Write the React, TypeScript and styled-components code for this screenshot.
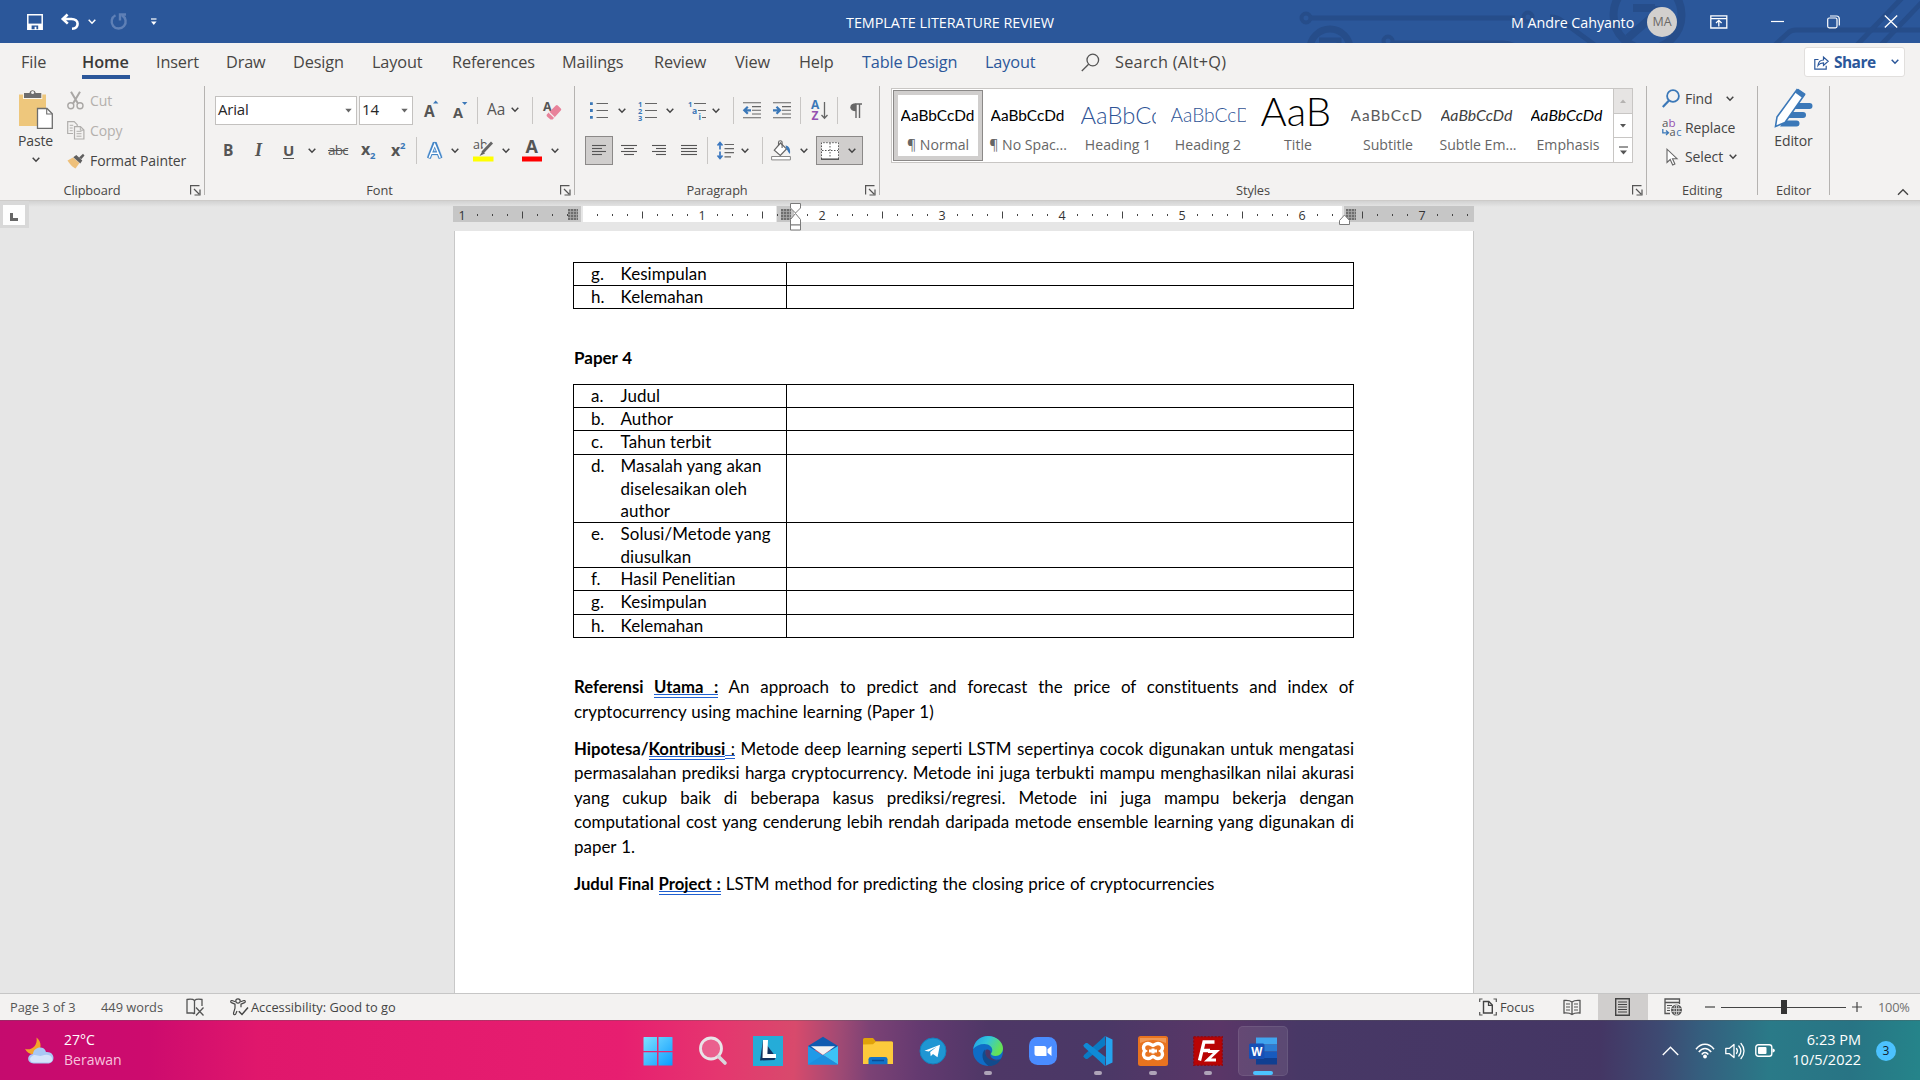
import React from "react";
import styled, { createGlobalStyle } from "styled-components";

const UI = `"Open Sans", "Noto Sans", sans-serif`;
const DOC = `Lato, "Noto Sans", sans-serif`;

const Global = createGlobalStyle`
  * { box-sizing: border-box; }
  html, body { margin: 0; padding: 0; overflow: hidden; }
  body { font-family: ${UI}; color: #444; }
  svg { display: block; flex: none; overflow: visible; }
`;

const Screen = styled.div`
  width: 1920px;
  height: 1080px;
  display: flex;
  flex-direction: column;
  overflow: hidden;
  background: #e6e6e6;
`;

/* ---------- shared pieces ---------- */

type SlotProps = { $w?: number; $pl?: number; $gap?: number };
const Slot = styled.div<SlotProps>`
  flex: none;
  display: flex;
  align-items: center;
  width: ${(p) => (p.$w ? `${p.$w}px` : "auto")};
  padding-left: ${(p) => p.$pl ?? 0}px;
  gap: ${(p) => p.$gap ?? 0}px;
  white-space: nowrap;
`;

type IcoProps = { w: number; h: number; children: React.ReactNode };
const Ico = ({ w, h, children }: IcoProps) => (
  <svg width={w} height={h} viewBox={`0 0 ${w} ${h}`} fill="none">
    {children}
  </svg>
);

const Chevron = ({ color = "#444" }: { color?: string }) => (
  <Ico w={8} h={6}>
    <path d="M.7.8L4 4.200 7.300.8" stroke={color} strokeWidth="1.5" />
  </Ico>
);

const Caret = ({ color = "#666" }: { color?: string }) => (
  <Ico w={7} h={5}>
    <path d="M.3.8h6.400L3.500 4.600z" fill={color} />
  </Ico>
);

/* ---------- title bar ---------- */

const TitleBar = styled.header`
  position: relative;
  height: 43px;
  flex: none;
  display: flex;
  align-items: center;
  background: #2b579a;
  color: #fff;
  font-size: 14px;
`;
const Circuit = styled.div`
  position: absolute;
  top: 0;
  right: 0;
  height: 43px;
  overflow: hidden;
`;
const TitleContent = styled.div`
  position: relative;
  display: flex;
  align-items: center;
  height: 43px;
  width: 100%;
`;
const DocTitle = styled.div`
  width: 664px;
  padding-top: 1px;
  font-size: 14.4px;
  letter-spacing: -0.04px;
  white-space: nowrap;
`;
const UserName = styled.div`
  width: 136px;
  padding-top: 1px;
  font-size: 14.3px;
  letter-spacing: -0.05px;
  white-space: nowrap;
`;
const Avatar = styled.div`
  width: 30px;
  height: 30px;
  margin-right: 33px;
  border-radius: 50%;
  background: #d2d0ce;
  color: #6b6966;
  font-size: 12.5px;
  display: flex;
  align-items: center;
  justify-content: center;
`;

const TitleBarView = () => (
  <TitleBar>
    <Circuit>
      <svg width="640" height="43" viewBox="1280 0 640 43" fill="none" stroke="#264d8a" strokeWidth="5">
        <circle cx="1306" cy="18" r="4.5" strokeWidth="4" />
        <path d="M1311 18h204" />
        <circle cx="1330" cy="49" r="20" strokeWidth="7" />
        <path d="M1319 40h20v6" strokeWidth="5" />
        <circle cx="1388" cy="41" r="4.5" strokeWidth="4" />
        <path d="M1393 43h110q10 0 15 6" />
        <circle cx="1528" cy="17" r="4.5" strokeWidth="4" />
        <path d="M1550 17q8 0 12 4l34 25" />
        <circle cx="1647.5" cy="15" r="34" strokeWidth="8" />
        <path d="M1633 8h22M1660 10l-32 28M1656 6v22" strokeWidth="8" />
        <path d="M1774 46l14-13q3-3 8-3h124" />
        <path d="M1856 46l46-48M1880 46l46-48" />
      </svg>
    </Circuit>
    <TitleContent>
      <Slot $w={61} $pl={27}>
        <Ico w={16} h={16}>
          <path d="M.8.8h14.400v14.400H.8z" stroke="#fff" strokeWidth="1.5" />
          <path d="M1 9.600h14v5.600H1z" fill="#fff" />
          <path d="M4.600 11.400h6.600v3.800H9.400v-2.400H7.600v2.400h-3z" fill="#2b579a" />
        </Ico>
      </Slot>
      <Slot $w={27}>
        <Ico w={18} h={17}>
          <path d="M6.600 1.500L1.800 6l5 4.600M2 6h8.600c3.400 0 6 2 6 4.800 0 2.800-1.800 4.800-5.600 5" stroke="#fff" strokeWidth="2.6" />
        </Ico>
      </Slot>
      <Slot $w={22}>
        <Chevron color="#fff" />
      </Slot>
      <Slot $w={41}>
        <Ico w={17} h={17}>
          <path d="M5.500 2.300A7 7 0 1 0 12 2.400M10 7.500V1.500h6" stroke="#5f80b6" strokeWidth="2.4" />
        </Ico>
      </Slot>
      <Slot $w={695}>
        <Ico w={6} h={8}>
          <path d="M0 1h5.500" stroke="#fff" strokeWidth="1.2" />
          <path d="M0 3.600h5.600L2.800 7z" fill="#fff" />
        </Ico>
      </Slot>
      <DocTitle>TEMPLATE LITERATURE REVIEW</DocTitle>
      <Slot $w={1} />
      <UserName>M Andre Cahyanto</UserName>
      <Avatar>MA</Avatar>
      <Slot $w={61}>
        <Ico w={18} h={14}>
          <path d="M.8.8h16v12.200H.8zM.8 3.600h16" stroke="#fff" strokeWidth="1.3" />
          <path d="M8.800 11.500V5.500M6 8l2.800-2.700L11.600 8" stroke="#fff" strokeWidth="1.3" />
        </Ico>
      </Slot>
      <Slot $w={56}>
        <Ico w={13} h={2}>
          <path d="M0 .5h13" stroke="#fff" strokeWidth="1.2" />
        </Ico>
      </Slot>
      <Slot $w={57}>
        <Ico w={13} h={14}>
          <rect x=".7" y="3" width="9.3" height="9.8" rx="1.5" stroke="#fff" strokeWidth="1.2" />
          <path d="M3 1h6.500Q12.300 1 12.300 4v6.500" stroke="#fff" strokeWidth="1.2" />
        </Ico>
      </Slot>
      <Ico w={14} h={13}>
        <path d="M.8.500l12.400 12M13.200.500L.8 12.500" stroke="#fff" strokeWidth="1.3" />
      </Ico>
    </TitleContent>
  </TitleBar>
);

/* ---------- tab strip ---------- */

const Tabs = styled.nav`
  height: 41px;
  flex: none;
  display: flex;
  padding-left: 21px;
  background: #f3f2f1;
`;
const Tab = styled.div<{ $w: number; $blue?: boolean; $ls?: number }>`
  width: ${(p) => p.$w}px;
  height: 38px;
  flex: none;
  font-size: 16.3px;
  letter-spacing: ${(p) => p.$ls ?? -0.15}px;
  line-height: 38px;
  color: ${(p) => (p.$blue ? "#2b579a" : "#484644")};
  white-space: nowrap;
`;
const ActiveTab = styled(Tab)`
  font-weight: 600;
  color: #3b3a39;
`;
const ActiveLabel = styled.span`
  display: block;
  width: 48px;
  height: 36px;
  border-bottom: 4px solid #2b579a;
`;
const ShareButton = styled.div`
  width: 101px;
  height: 30px;
  margin-top: 4px;
  padding-left: 9px;
  display: flex;
  align-items: center;
  background: #fff;
  border: 1px solid #e1dfdd;
  border-radius: 3px;
  color: #2b579a;
  font-weight: 700;
  font-size: 15.5px;
  letter-spacing: -0.55px;
`;
const SearchIcon = styled.div`
  width: 34px;
  padding-top: 10px;
`;

const TABS: { t: string; w: number; blue?: boolean; active?: boolean }[] = [
  { t: "File", w: 61 },
  { t: "Home", w: 74, active: true },
  { t: "Insert", w: 70 },
  { t: "Draw", w: 67 },
  { t: "Design", w: 79 },
  { t: "Layout", w: 80 },
  { t: "References", w: 110 },
  { t: "Mailings", w: 92 },
  { t: "Review", w: 81 },
  { t: "View", w: 64 },
  { t: "Help", w: 63 },
  { t: "Table Design", w: 123, blue: true },
  { t: "Layout", w: 96, blue: true },
];

const TabStrip = () => (
  <Tabs>
    {TABS.map((t, i) =>
      t.active ? (
        <ActiveTab key={i} $w={t.w} $ls={-0.1}>
          <ActiveLabel>{t.t}</ActiveLabel>
        </ActiveTab>
      ) : (
        <Tab key={i} $w={t.w} $blue={t.blue}>
          {t.t}
        </Tab>
      )
    )}
    <SearchIcon>
      <Ico w={19} h={19}>
        <circle cx="11.8" cy="7" r="5.8" stroke="#555" strokeWidth="1.3" />
        <path d="M7.600 11.200L.8 18" stroke="#555" strokeWidth="1.3" />
      </Ico>
    </SearchIcon>
    <Tab $w={689} $ls={0.27}>Search (Alt+Q)</Tab>
    <ShareButton>
      <Slot $w={20}>
        <Ico w={15} h={15}>
          <path d="M4.500 4.500H.8v9.700h11.400v-3.500" stroke="#2b579a" strokeWidth="1.2" />
          <path d="M4 10.500c.4-3.500 2.300-5.500 5.500-5.500V2l4.700 4.300-4.700 4.200V7.800C7 7.800 5.500 8.500 4 10.500z" stroke="#2b579a" strokeWidth="1.2" />
        </Ico>
      </Slot>
      <Slot $w={57}>Share</Slot>
      <Chevron color="#2b579a" />
    </ShareButton>
  </Tabs>
);

/* ---------- ribbon ---------- */

const Ribbon = styled.section`
  height: 117px;
  flex: none;
  display: flex;
  background: #f3f2f1;
  border-bottom: 1px solid #cdcbc9;
`;
const Group = styled.div<{ $w: number }>`
  width: ${(p) => p.$w}px;
  flex: none;
  display: flex;
  flex-direction: column;
`;
const Body = styled.div`
  height: 96px;
  display: flex;
  flex-direction: column;
  padding-top: 12px;
  gap: 11px;
`;
const SideBySide = styled.div`
  height: 96px;
  display: flex;
`;
const Foot = styled.div`
  height: 20px;
  display: flex;
  align-items: center;
  font-size: 12.8px;
  letter-spacing: -0.1px;
  color: #484644;
`;
const FootLabel = styled.div`
  flex: 1;
  text-align: center;
`;
const Launcher = styled.div`
  width: 20px;
  padding-left: 6px;
`;
const Divider = styled.div`
  width: 1px;
  height: 109px;
  margin-top: 2px;
  flex: none;
  background: #b5b3b1;
`;
const ToolRow = styled.div<{ $pl?: number }>`
  height: 29px;
  display: flex;
  align-items: center;
  padding-left: ${(p) => p.$pl ?? 0}px;
`;
const ToolSep = styled.div`
  width: 1px;
  height: 27px;
  flex: none;
  background: #c8c6c4;
`;

const GroupFoot = ({ label, launcher = true }: { label: string; launcher?: boolean }) => (
  <Foot>
    <FootLabel>{label}</FootLabel>
    {launcher && (
      <Launcher>
        <Ico w={11} h={11}>
          <path d="M.6 9.500V.6H9.500" stroke="#555" strokeWidth="1.2" />
          <path d="M4 4l5 5M10 4.500V10H4.500" stroke="#555" strokeWidth="1.2" />
        </Ico>
      </Launcher>
    )}
  </Foot>
);

/* clipboard */
const BigButton = styled.div<{ $w: number; $pl?: number }>`
  width: ${(p) => p.$w}px;
  padding-top: 4px;
  padding-left: ${(p) => p.$pl ?? 0}px;
  display: flex;
  flex-direction: column;
  align-items: center;
  font-size: 14px;
  letter-spacing: -0.1px;
`;
const BigLabel = styled.div`
  height: 20px;
  margin: 2px 0 6px;
  line-height: 20px;
`;
const CommandList = styled.div<{ $h: number; $pt: number }>`
  display: flex;
  flex-direction: column;
  padding-top: ${(p) => p.$pt}px;
  font-size: 14px;
  letter-spacing: -0.1px;
  & > div {
    height: ${(p) => p.$h}px;
  }
`;
const Command = styled.div<{ $off?: boolean }>`
  display: flex;
  align-items: center;
  color: ${(p) => (p.$off ? "#b3b0ad" : "#444")};
`;

const Clipboard = () => (
  <Group $w={204}>
    <SideBySide>
      <BigButton $w={67} $pl={4}>
        <Ico w={35} h={41}>
          <path d="M1 6.500h27v31.500H1z" fill="#eec77c" />
          <path d="M5 11V4.500h6.500a3.200 3.200 0 0 1 6.300 0h6.500V11z" fill="#fbf6ea" />
          <path d="M6 10V5h5.500a3.200 3.200 0 0 1 6.300 0h5.500v5z" fill="#6d6d6d" />
          <circle cx="14.600" cy="4.500" r="1.500" fill="#f3f2f1" />
          <path d="M19.500 20.500h9.500l5.300 5.300v14.500H19.500z" fill="#fff" stroke="#6d6d6d" strokeWidth="1.3" />
          <path d="M28.700 20.700v5.300h5.300" stroke="#6d6d6d" strokeWidth="1.1" />
        </Ico>
        <BigLabel>Paste</BigLabel>
        <Chevron />
      </BigButton>
      <CommandList $h={30.3} $pt={1}>
        <Command $off>
          <Slot $w={23}>
            <Ico w={17} h={19}>
              <path d="M4 .8l6.800 11.500M13 .8L6.200 12.300" stroke="#a9a7a5" strokeWidth="2" />
              <circle cx="3.8" cy="14.8" r="3" stroke="#a9a7a5" strokeWidth="1.4" />
              <circle cx="13" cy="14.8" r="3" stroke="#a9a7a5" strokeWidth="1.4" />
            </Ico>
          </Slot>
          Cut
        </Command>
        <Command $off>
          <Slot $w={23}>
            <Ico w={18} h={19}>
              <path d="M6 12.500H.7V.7h6.500l3 3V5" stroke="#b0aeac" strokeWidth="1.2" />
              <path d="M7.500 5.700h6l3.400 3.400v8.900H7.500z" stroke="#b0aeac" strokeWidth="1.2" />
              <path d="M2.700 4.300h3.500M2.700 7h3M2.700 9.700h3M9.500 10.300h5M9.500 12.700h5M9.500 15.200h5M13.300 6v3.200h3.400" stroke="#b0aeac" strokeWidth="1" />
            </Ico>
          </Slot>
          Copy
        </Command>
        <Command>
          <Slot $w={23}>
            <Ico w={18} h={16}>
              <path d="M.5 7.500L6 4.500l6.500 5.500-4 5.500C6 14.500 2.500 11 .5 7.500z" fill="#eec07a" />
              <path d="M6.300 4.200l3-2.200 6 5.500-2 3z" fill="#5f5f5f" />
              <path d="M12 4.500L16 .8l1.500 1.700-3.200 3.800z" fill="#5f5f5f" />
            </Ico>
          </Slot>
          Format Painter
        </Command>
      </CommandList>
    </SideBySide>
    <GroupFoot label="Clipboard" />
  </Group>
);

/* font */
const Combo = styled.div<{ $w: number }>`
  width: ${(p) => p.$w}px;
  height: 29px;
  margin-right: 2px;
  padding: 0 4px 0 2px;
  display: flex;
  align-items: center;
  justify-content: space-between;
  background: #fff;
  border: 1px solid #c3c1bf;
  color: #262626;
  font-size: 15px;
  line-height: 25px;
  letter-spacing: -0.2px;
`;
const ComboText = styled.span`
  padding-bottom: 2px;
`;
const Glyph = styled.span<{ $s: number; $b?: boolean; $i?: boolean; $c?: string }>`
  font-size: ${(p) => p.$s}px;
  font-weight: ${(p) => (p.$b ? 700 : 400)};
  font-style: ${(p) => (p.$i ? "italic" : "normal")};
  color: ${(p) => p.$c ?? "#555"};
  line-height: 1.2;
`;
const CaseGlyph = styled(Glyph)`
  padding-bottom: 1px;
`;
const SerifItalic = styled(Glyph)`
  font-family: "Liberation Serif", serif;
  padding-left: 1px;
`;
const UnderGlyph = styled(Glyph)`
  line-height: 1;
  border-bottom: 1px solid #555;
`;
const StrikeGlyph = styled(Glyph)`
  text-decoration: line-through;
  letter-spacing: -0.8px;
`;
const LetterText = ({
  x,
  y,
  s,
  c = "#555",
  b,
  children,
}: {
  x: number;
  y: number;
  s: number;
  c?: string;
  b?: boolean;
  children: React.ReactNode;
}) => (
  <text x={x} y={y} fontSize={s} fill={c} fontWeight={b ? 700 : 400} fontFamily='"Open Sans", sans-serif'>
    {children}
  </text>
);

const FontGroup = () => (
  <Group $w={369}>
    <Body>
      <ToolRow $pl={10}>
        <Combo $w={142}>
          <ComboText>Arial</ComboText> <Caret />
        </Combo>
        <Combo $w={54}>
          <ComboText>14</ComboText> <Caret />
        </Combo>
        <Slot $w={38} $pl={9}>
          <Ico w={15} h={20}>
            <LetterText x={0} y={15.5} s={15.5} b>A</LetterText>
            <path d="M9 2.500l2.700-3 2.700 3z" fill="#3b78b8" />
          </Ico>
        </Slot>
        <Slot $w={24}>
          <Ico w={15} h={20}>
            <LetterText x={0} y={16.5} s={14.5} b>A</LetterText>
            <path d="M9 1l2.700 3L14.400 1z" fill="#3b78b8" />
          </Ico>
        </Slot>
        <ToolSep />
        <Slot $w={54} $pl={9} $gap={6}>
          <CaseGlyph $s={15.4}>Aa</CaseGlyph>
          <Chevron />
        </Slot>
        <ToolSep />
        <Slot $pl={10}>
          <Ico w={19} h={20}>
            <LetterText x={0} y={10} s={12.5} b>A</LetterText>
            <path d="M3.800 13.500l9-9q1-1 2 0l3 3q1 1 0 2l-8.200 9H7.500L4 15.500q-.8-1-.2-2z" fill="#e8829a" />
            <path d="M6 11.300l5.500 5.300" stroke="#f3f2f1" strokeWidth="1.2" />
          </Ico>
        </Slot>
      </ToolRow>
      <ToolRow>
        <Slot $w={49} $pl={18}><Glyph $s={15.5} $b>B</Glyph></Slot>
        <Slot $w={29}><SerifItalic $s={18} $b $i>I</SerifItalic></Slot>
        <Slot $w={25}><UnderGlyph $s={15} $b>U</UnderGlyph></Slot>
        <Slot $w={20}><Chevron /></Slot>
        <Slot $w={33}><StrikeGlyph $s={13.5}>abc</StrikeGlyph></Slot>
        <Slot $w={30}>
          <Ico w={16} h={20}>
            <LetterText x={0} y={14} s={16} b>x</LetterText>
            <LetterText x={9} y={18} s={9.5} b c="#3b78b8">2</LetterText>
          </Ico>
        </Slot>
        <Slot $w={25}>
          <Ico w={16} h={20}>
            <LetterText x={0} y={15} s={16} b>x</LetterText>
            <LetterText x={9} y={8} s={9.5} b c="#3b78b8">2</LetterText>
          </Ico>
        </Slot>
        <ToolSep />
        <Slot $w={34} $pl={9}>
          <Ico w={18} h={20}>
            <g stroke="#bcd7f2" strokeWidth="5" strokeLinejoin="round">
              <path d="M3 16.500L8.700 3l5.700 13.500M5 12h7.500" />
            </g>
            <g stroke="#4385c6" strokeWidth="3.8">
              <path d="M2.800 17.300L8.200 3h1l5.400 14.300M5 12.200h7.500" />
            </g>
            <g stroke="#fff" strokeWidth="1.5">
              <path d="M3.200 16.800L8.700 3.400l5.500 13.400M5 12.200h7.500" />
            </g>
          </Ico>
        </Slot>
        <Slot $w={22}><Chevron /></Slot>
        <Slot $w={29}>
          <Ico w={21} h={22}>
            <LetterText x={0} y={9} s={12.5}>ab</LetterText>
            <path d="M18.500 2.500L8.500 13.500" stroke="#f3f2f1" strokeWidth="5" />
            <path d="M19 2.500L9.500 12.500" stroke="#666" strokeWidth="2.8" />
            <path d="M9.500 11l2.500 2.500L6.500 16z" fill="#666" />
            <path d="M0 16.500h20.500v5H0z" fill="#ff0" />
          </Ico>
        </Slot>
        <Slot $w={20}><Chevron /></Slot>
        <Slot $w={29}>
          <Ico w={20} h={22}>
            <LetterText x={3.6} y={13} s={18} b>A</LetterText>
            <path d="M0 16.500h20v5H0z" fill="#f00" />
          </Ico>
        </Slot>
        <Chevron />
      </ToolRow>
    </Body>
    <GroupFoot label="Font" />
  </Group>
);

/* paragraph */
const Pressed = styled.div<{ $w: number; $pl: number; $gap?: number }>`
  width: ${(p) => p.$w}px;
  height: 29px;
  flex: none;
  padding-left: ${(p) => p.$pl}px;
  gap: ${(p) => p.$gap ?? 0}px;
  display: flex;
  align-items: center;
  background: #d0cecd;
  border: 1px solid #8b8988;
`;

const Lines = ({ w, rows }: { w: number; rows: [number, number][] }) => (
  <Ico w={w} h={14}>
    {rows.map(([a, b], i) => (
      <path key={i} d={`M${a} ${1.5 + i * 3}h${b - a}`} stroke="#555" strokeWidth="1.1" />
    ))}
  </Ico>
);

const Dent = ({ flip }: { flip?: boolean }) => (
  <Ico w={18} h={17}>
    <path d="M0 .8h18M9 4.600h9M9 8.300h9M9 12h9M0 15.800h18" stroke="#666" strokeWidth="1.1" />
    <path
      d={flip ? "M0 8.300h6M3.500 4.800L7 8.300l-3.500 3.500" : "M1.500 8.300H8M4.800 4.800L1.300 8.300l3.500 3.500"}
      stroke="#3b78b8"
      strokeWidth="2.2"
    />
  </Ico>
);

const Paragraph = () => (
  <Group $w={304}>
    <Body>
      <ToolRow>
        <Slot $w={43} $pl={15}>
          <Ico w={19} h={18}>
            <path d="M6.500 1.500H18M6.500 8.500H18M6.500 15.500H18" stroke="#666" strokeWidth="1.2" />
            <path d="M0 .2h2.800V3H0zM0 7.100h2.800v2.800H0zM0 14h2.800v2.800H0z" fill="#3b78b8" />
          </Ico>
        </Slot>
        <Slot $w={20}><Chevron /></Slot>
        <Slot $w={28}>
          <Ico w={19} h={20}>
            <path d="M7 2.500H19M7 9.500H19M7 16.500H19" stroke="#666" strokeWidth="1.2" />
            <LetterText x={0} y={5.5} s={7.5} b c="#3b78b8">1</LetterText>
            <LetterText x={0} y={12.5} s={7.5} b c="#3b78b8">2</LetterText>
            <LetterText x={0} y={19.5} s={7.5} b c="#3b78b8">3</LetterText>
          </Ico>
        </Slot>
        <Slot $w={22}><Chevron /></Slot>
        <Slot $w={24}>
          <Ico w={19} h={20}>
            <path d="M6 2.500H18M10 9.500H18M14 16.500H18" stroke="#666" strokeWidth="1.2" />
            <LetterText x={0} y={5.5} s={7.5} b c="#3b78b8">1</LetterText>
            <LetterText x={4} y={12.5} s={8.5} b c="#3b78b8">a</LetterText>
            <LetterText x={10.5} y={19} s={8} b c="#3b78b8">i</LetterText>
          </Ico>
        </Slot>
        <Slot $w={21}><Chevron /></Slot>
        <ToolSep />
        <Slot $w={39} $pl={9}><Dent /></Slot>
        <Slot $w={27}><Dent flip /></Slot>
        <ToolSep />
        <Slot $w={36} $pl={10}>
          <Ico w={18} h={21}>
            <LetterText x={0} y={9} s={12} b c="#3b78b8">A</LetterText>
            <LetterText x={0.6} y={19.5} s={12} b c="#9450b0">Z</LetterText>
            <path d="M13.500 2v16M10.500 15l3 3.300 3-3.300" stroke="#666" strokeWidth="1.3" />
          </Ico>
        </Slot>
        <ToolSep />
        <Slot $pl={12}>
          <Ico w={12} h={16}>
            <path d="M5.500 1H12M6 1v14M9.500 1v14" stroke="#666" strokeWidth="1.4" />
            <path d="M6 .3v8C2.500 8.300.3 7 .3 4.300S2.500.3 6 .3z" fill="#666" />
          </Ico>
        </Slot>
      </ToolRow>
      <ToolRow $pl={10}>
        <Pressed $w={28} $pl={6}>
          <Lines w={15} rows={[[0, 14], [0, 10], [0, 14], [0, 10]]} />
        </Pressed>
        <Slot $w={39} $pl={8}><Lines w={16} rows={[[0, 16], [3, 13], [0, 16], [3, 13]]} /></Slot>
        <Slot $w={29}><Lines w={15} rows={[[0, 14], [4, 14], [0, 14], [4, 14]]} /></Slot>
        <Slot $w={26}><Lines w={16} rows={[[0, 16], [0, 16], [0, 16], [0, 16]]} /></Slot>
        <ToolSep />
        <Slot $w={33} $pl={9}>
          <Ico w={18} h={19}>
            <path d="M7.500 3.500H17M7.500 7.600H17M7.500 11.700H17M7.500 15.800H14" stroke="#666" strokeWidth="1.2" />
            <path d="M3 1.500v16M.5 4.500L3 1.500l2.500 3M.5 14.500l2.500 3 2.500-3" stroke="#3b78c0" strokeWidth="1.7" />
            <path d="M1.500 9.500h3" stroke="#f3f2f1" strokeWidth="2" />
          </Ico>
        </Slot>
        <Slot $w={21}><Chevron /></Slot>
        <ToolSep />
        <Slot $w={37} $pl={8}>
          <Ico w={20} h={21}>
            <path d="M9.500 3L3.300 10.200l6 5.200 6.200-6.500z" fill="#fff" stroke="#666" strokeWidth="1.2" />
            <path d="M7.500 6V2.500a1.800 1.800 0 0 1 3.600 0V8" stroke="#666" strokeWidth="1.1" />
            <path d="M14.500 5.500c3.500.5 5 3 4.500 8.500-1.500-1-2-3-3.500-5z" fill="#3b78b8" />
            <path d="M.6 16.500h18.800v3.400H.6z" fill="#fff" stroke="#888" />
          </Ico>
        </Slot>
        <Slot $w={16}><Chevron /></Slot>
        <Pressed $w={47} $pl={4} $gap={9}>
          <Ico w={18} h={18}>
            <path d="M.5.500h17v16H.5z" fill="#fff" />
            <path d="M.5 17V.7h17V17M9 1v15M1 8.500h16" stroke="#555" strokeDasharray="1.5 1.5" />
            <path d="M0 17.200h18" stroke="#444" strokeWidth="1.3" />
          </Ico>
          <Chevron />
        </Pressed>
      </ToolRow>
    </Body>
    <GroupFoot label="Paragraph" />
  </Group>
);

/* styles gallery */
const GalleryWrap = styled.div`
  height: 96px;
  padding: 4px 0 0 11px;
`;
const Gallery = styled.div`
  width: 742px;
  height: 75px;
  display: flex;
  background: #fff;
  border: 1px solid #c8c6c4;
  padding: 1px 0 0 1px;
`;
const StyleItem = styled.div<{ $sel?: boolean }>`
  width: 90px;
  height: 71px;
  flex: none;
  display: flex;
  flex-direction: column;
  align-items: center;
  padding-top: 8px;
  box-shadow: ${(p) => (p.$sel ? "inset 0 0 0 1px #8b8988, inset 0 0 0 5px #d0cecd" : "none")};
`;
type PreviewProps = { $s: number; $c: string; $w?: number; $i?: boolean; $ls?: number; $up?: number };
const Preview = styled.div<PreviewProps>`
  width: 75px;
  height: 33px;
  padding-bottom: ${(p) => p.$up ?? 0}px;
  display: flex;
  align-items: center;
  overflow: hidden;
  white-space: nowrap;
  font-family: ${DOC};
  font-size: ${(p) => p.$s}px;
  font-weight: ${(p) => p.$w ?? 400};
  font-style: ${(p) => (p.$i ? "italic" : "normal")};
  letter-spacing: ${(p) => p.$ls ?? 0}px;
  line-height: 30px;
  color: ${(p) => p.$c};
`;
const StyleName = styled.div`
  height: 26px;
  line-height: 28px;
  font-size: 14.1px;
  color: #666;
  white-space: nowrap;
`;
const GalleryNav = styled.div`
  width: 19px;
  margin: -1px 0 0 auto;
  display: flex;
  flex-direction: column;
  border-left: 1px solid #c8c6c4;
`;
const NavBtn = styled.div<{ $off?: boolean }>`
  flex: 1;
  display: flex;
  flex-direction: column;
  gap: 3px;
  align-items: center;
  justify-content: center;
  background: ${(p) => (p.$off ? "#e6e4e3" : "#fff")};
  & + & {
    border-top: 1px solid #c8c6c4;
  }
`;

const STYLES = [
  { n: "¶ Normal", p: "AaBbCcDd", s: 15.4, c: "#000", sel: true },
  { n: "¶ No Spac...", p: "AaBbCcDd", s: 15.4, c: "#000" },
  { n: "Heading 1", p: "AaBbCc", s: 23.8, c: "#2f5496", w: 300 },
  { n: "Heading 2", p: "AaBbCcD", s: 19.2, c: "#2f5496", w: 300 },
  { n: "Title", p: "AaB", s: 40, c: "#000", w: 300, up: 8 },
  { n: "Subtitle", p: "AaBbCcD", s: 15.4, c: "#5a5a5a", ls: 1 },
  { n: "Subtle Em...", p: "AaBbCcDd", s: 15.9, c: "#404040", i: true },
  { n: "Emphasis", p: "AaBbCcDd", s: 15.9, c: "#000", i: true },
];

const StylesGroup = () => (
  <Group $w={766}>
    <GalleryWrap>
      <Gallery>
        {STYLES.map((x) => (
          <StyleItem key={x.n} $sel={x.sel}>
            <Preview $s={x.s} $c={x.c} $w={x.w} $i={x.i} $ls={x.ls} $up={x.up}>{x.p}</Preview>
            <StyleName>{x.n}</StyleName>
          </StyleItem>
        ))}
        <GalleryNav>
          <NavBtn $off>
            <Ico w={6} h={4}><path d="M0 4h6L3 .5z" fill="#b5b3b1" /></Ico>
          </NavBtn>
          <NavBtn>
            <Ico w={6} h={4}><path d="M0 0h6L3 3.500z" fill="#555" /></Ico>
          </NavBtn>
          <NavBtn>
            <Ico w={9} h={9}>
              <path d="M0 1h9" stroke="#555" strokeWidth="1.2" />
              <path d="M1 4.500h7L4.500 8.500z" fill="#555" />
            </Ico>
          </NavBtn>
        </GalleryNav>
      </Gallery>
    </GalleryWrap>
    <GroupFoot label="Styles" />
  </Group>
);

/* editing + editor */
const EditingBody = styled.div`
  height: 96px;
  padding-left: 15px;
`;
const Collapse = styled.div`
  flex: 1;
  display: flex;
  align-items: flex-end;
  justify-content: flex-end;
  padding: 0 11px 4px 0;
`;

const Editing = () => (
  <Group $w={110}>
    <EditingBody>
      <CommandList $h={29.2} $pt={0}>
        <Command>
          <Slot $w={23}>
            <Ico w={18} h={19}>
              <circle cx="11" cy="7" r="5.9" stroke="#3b78b8" strokeWidth="1.8" />
              <path d="M7 11.500L.8 18" stroke="#3b78b8" strokeWidth="2.2" />
            </Ico>
          </Slot>
          <Slot $w={41}>Find</Slot>
          <Chevron />
        </Command>
        <Command>
          <Slot $w={23}>
            <Ico w={20} h={20}>
              <LetterText x={0} y={9} s={11.5}>a</LetterText>
              <LetterText x={6.6} y={9} s={11.5} c="#9450b0">b</LetterText>
              <LetterText x={7.6} y={18} s={11}>a</LetterText>
              <LetterText x={14.2} y={18} s={11} c="#3b78b8">c</LetterText>
              <path d="M.8 11v3.800H6M4 12.500l2.500 2.300L4 17" stroke="#3b78b8" strokeWidth="1.3" />
            </Ico>
          </Slot>
          Replace
        </Command>
        <Command>
          <Slot $w={23} $pl={4}>
            <Ico w={12} h={18}>
              <path d="M1 1.200v13.300l3.200-3 2.500 5.500 2.200-1-2.400-5.300H11z" fill="#fff" stroke="#666" strokeWidth="1.1" />
            </Ico>
          </Slot>
          <Slot $w={44}>Select</Slot>
          <Chevron />
        </Command>
      </CommandList>
    </EditingBody>
    <GroupFoot label="Editing" launcher={false} />
  </Group>
);

const EditorGroup = () => (
  <Group $w={71}>
    <SideBySide>
      <BigButton $w={71}>
        <Ico w={40} h={41}>
          <path d="M17 15h18.500a3 3 0 0 1 0 6H14zM14 24h15a3 3 0 0 1 0 6H10zM10 32.500h12.500a3 3 0 0 1 0 6H6z" fill="#3b78b8" />
          <path d="M3 29L23 1.500l7.500 5.200L11 34.500 1.500 38.500z" fill="#fff" stroke="#3b78b8" strokeWidth="1.6" />
          <path d="M21 4.500L24.200.8l7.300 5-3 4.200z" fill="#3b78b8" />
        </Ico>
        <BigLabel>Editor</BigLabel>
      </BigButton>
    </SideBySide>
    <GroupFoot label="Editor" launcher={false} />
  </Group>
);

const RibbonView = () => (
  <Ribbon>
    <Clipboard />
    <Divider />
    <FontGroup />
    <Divider />
    <Paragraph />
    <Divider />
    <StylesGroup />
    <Divider />
    <Editing />
    <Divider />
    <EditorGroup />
    <Divider />
    <Collapse>
      <Ico w={12} h={8}>
        <path d="M1 6.800l5-5 5 5" stroke="#444" strokeWidth="1.4" />
      </Ico>
    </Collapse>
  </Ribbon>
);

/* ---------- workspace ---------- */

const Workspace = styled.main`
  height: 792px;
  flex: none;
  display: flex;
  background: linear-gradient(#d2d2d2, #e6e6e6 6px);
`;
const Gutter = styled.div`
  width: 453px;
  flex: none;
`;
const TabStop = styled.div`
  width: 29px;
  height: 27px;
  padding: 4px 0 0 3px;
  background: #d8d8d8;
`;
const TabStopFace = styled.div`
  width: 22px;
  height: 20px;
  padding: 8px 0 0 7px;
  background: #fdfdfd;
`;
const TabStopMark = styled.div`
  width: 8px;
  height: 8px;
  border: solid #666;
  border-width: 0 0 3px 3px;
`;
const Column = styled.div`
  width: 1021px;
  display: flex;
  flex-direction: column;
`;
const RulerBar = styled.div`
  height: 30px;
`;
const Page = styled.article`
  width: 1020px;
  margin-left: 1px;
  flex: 1;
  padding: 31px 0 0 118px;
  background: #fff;
  border: solid #c8c8c8;
  border-width: 0 1px;
  font-family: ${DOC};
  font-size: 16.95px;
  font-variant-ligatures: none;
  color: #000;
`;

const Hatch = ({ x }: { x: number }) => (
  <g>
    <rect x={x} y="8" width="10" height="11" fill="#6e6e6e" />
    <path
      d={`M${x} 10.500h10M${x} 13.500h10M${x} 16.500h10M${x + 2.5} 8v11M${x + 5.5} 8v11M${x + 8.5} 8v11`}
      stroke="#a8a8a8"
      strokeWidth=".8"
    />
  </g>
);

const Ruler = () => {
  const marks: React.ReactNode[] = [];
  for (let i = -8; i <= 59; i++) {
    const x = 129 + i * 15;
    if (i === 0 || (x > 326 && x < 350) || x > 1018 || (x > 890 && x < 902)) continue;
    if (i % 8 === 0) {
      marks.push(
        <text key={i} x={x} y="18.5" fontSize="12.5" textAnchor="middle" fill="#333" fontFamily='"Open Sans", sans-serif'>
          {Math.abs(i / 8)}
        </text>
      );
    } else if (i % 4 === 0) {
      marks.push(<path key={i} d={`M${x + 0.5} 10.500v7`} stroke="#444" />);
    } else {
      marks.push(<path key={i} d={`M${x + 0.5} 13v2`} stroke="#444" />);
    }
  }
  return (
    <svg width="1021" height="29" viewBox="0 0 1021 29" fill="none">
      <path d="M0 5h128v16H0z" fill="#c6c6c6" />
      <path d="M130 5h193v16H130z" fill="#fff" />
      <path d="M324 5h17v16h-17z" fill="#c6c6c6" />
      <path d="M341 5h548v16H341z" fill="#fff" />
      <path d="M891 5h130v16H891z" fill="#c6c6c6" />
      {marks}
      <Hatch x={115} />
      <Hatch x={328} />
      <Hatch x={893} />
      <g fill="#fff" stroke="#7a7a7a">
        <path d="M337.500 2.500h10v4.500l-5 5-5-5z" />
        <path d="M337.500 24v-5.500l5-6 5 6V24z" />
        <path d="M337.500 24h10v5h-10z" />
        <path d="M886.500 23.500v-4l5-5.500 5 5.500v4z" />
      </g>
    </svg>
  );
};

const Table = styled.div`
  width: 781px;
  border: 1px solid #000;
`;
const Row = styled.div<{ $h: number }>`
  height: ${(p) => p.$h}px;
  display: flex;
  & + & {
    border-top: 1px solid #000;
  }
`;
const KeyCell = styled.div`
  width: 213px;
  display: flex;
  padding-left: 17px;
  border-right: 1px solid #000;
  line-height: 22.6px;
  letter-spacing: 0.07px;
`;
const Marker = styled.span`
  width: 29.5px;
  flex: none;
`;
const CellText = styled.div`
  white-space: pre;
`;
const PaperTitle = styled.h2`
  margin: 0 0 0 1px;
  height: 75px;
  padding-top: 37px;
  font-size: 17px;
  line-height: 24px;
  font-weight: 700;
  word-spacing: 0.6px;
`;
const Para = styled.div<{ $mt: number }>`
  width: 780px;
  margin-left: 1px;
  margin-top: ${(p) => p.$mt}px;
`;
const Line = styled.div<{ $last?: boolean }>`
  height: 24.5px;
  line-height: 24.5px;
  text-align: justify;
  text-align-last: ${(p) => (p.$last ? "left" : "justify")};
  word-spacing: ${(p) => (p.$last ? 0.7 : 0)}px;
  white-space: nowrap;
`;
const Bold = styled.b`
  font-weight: 700;
  font-size: 16.7px;
`;
const Flagged = styled.span`
  padding-bottom: 3px;
  background:
    linear-gradient(#1f5fd0, #1f5fd0) 0 17px / 100% 1px no-repeat,
    linear-gradient(#1f5fd0, #1f5fd0) 0 20px / 100% 1px no-repeat;
`;

type RowData = { k: string; t: string; h: number };
const PAPER3: RowData[] = [
  { k: "g.", t: "Kesimpulan", h: 22 },
  { k: "h.", t: "Kelemahan", h: 23 },
];
const PAPER4: RowData[] = [
  { k: "a.", t: "Judul", h: 22 },
  { k: "b.", t: "Author", h: 23 },
  { k: "c.", t: "Tahun terbit", h: 24 },
  { k: "d.", t: "Masalah yang akan\ndiselesaikan oleh\nauthor", h: 68 },
  { k: "e.", t: "Solusi/Metode yang\ndiusulkan", h: 45 },
  { k: "f.", t: "Hasil Penelitian", h: 23 },
  { k: "g.", t: "Kesimpulan", h: 24 },
  { k: "h.", t: "Kelemahan", h: 23 },
];

const PaperTable = ({ rows }: { rows: RowData[] }) => (
  <Table>
    {rows.map((r) => (
      <Row key={r.k} $h={r.h}>
        <KeyCell>
          <Marker>{r.k}</Marker>
          <CellText>{r.t}</CellText>
        </KeyCell>
      </Row>
    ))}
  </Table>
);

const DocumentView = () => (
  <Workspace>
    <Gutter>
      <TabStop>
        <TabStopFace>
          <TabStopMark />
        </TabStopFace>
      </TabStop>
    </Gutter>
    <Column>
      <RulerBar>
        <Ruler />
      </RulerBar>
      <Page>
        <PaperTable rows={PAPER3} />
        <PaperTitle>Paper 4</PaperTitle>
        <PaperTable rows={PAPER4} />
        <Para $mt={37}>
          <Line>
            <Bold>Referensi <Flagged>Utama :</Flagged></Bold> An approach to predict and forecast the price of constituents and index of
          </Line>
          <Line $last>cryptocurrency using machine learning (Paper 1)</Line>
        </Para>
        <Para $mt={12.5}>
          <Line>
            <Bold>Hipotesa/<Flagged>Kontribusi</Flagged></Bold><Flagged> :</Flagged> Metode deep learning seperti LSTM sepertinya cocok digunakan untuk mengatasi
          </Line>
          <Line>permasalahan prediksi harga cryptocurrency. Metode ini juga terbukti mampu menghasilkan nilai akurasi</Line>
          <Line>yang cukup baik di beberapa kasus prediksi/regresi. Metode ini juga mampu bekerja dengan</Line>
          <Line>computational cost yang cenderung lebih rendah daripada metode ensemble learning yang digunakan di</Line>
          <Line $last>paper 1.</Line>
        </Para>
        <Para $mt={12.5}>
          <Line $last>
            <Bold>Judul Final <Flagged>Project :</Flagged></Bold> LSTM method for predicting the closing price of cryptocurrencies
          </Line>
        </Para>
      </Page>
    </Column>
  </Workspace>
);

/* ---------- status bar ---------- */

const StatusBar = styled.footer`
  height: 27px;
  flex: none;
  display: flex;
  align-items: center;
  background: #f3f2f1;
  border-top: 1px solid #c6c6c6;
  font-size: 12.8px;
  color: #555;
`;
const ViewActive = styled.div`
  width: 50px;
  height: 26px;
  margin-right: 16px;
  display: flex;
  align-items: center;
  padding-left: 17px;
  background: #d0cecd;
`;
const Track = styled.div`
  width: 125px;
  height: 14px;
  margin: 0 6px;
  display: flex;
  align-items: center;
  background: linear-gradient(#444, #444) 0 7px / 100% 1px no-repeat;
`;
const Thumb = styled.div`
  width: 6px;
  height: 14px;
  margin-left: 60px;
  background: #333;
`;
const Zoomed = styled.div`
  margin-left: 16px;
  color: #707070;
  letter-spacing: -0.2px;
`;
const Dark = styled.span`
  color: #444;
  letter-spacing: 0.02px;
`;

const StatusView = () => (
  <StatusBar>
    <Slot $w={101} $pl={10}>Page 3 of 3</Slot>
    <Slot $w={85}>449 words</Slot>
    <Slot $w={44}>
      <Ico w={19} h={18}>
        <path d="M8.500 2.500C7 1 4 1 1 1.500v13.500h5c1.500 0 2 .3 2.500 1M8.500 16V2.500C10 1 13 1 16 1.500V8" stroke="#555" strokeWidth="1.3" />
        <path d="M10 9.500l7.500 8M17.500 9.500L10 17.500" stroke="#555" strokeWidth="1.3" />
      </Ico>
    </Slot>
    <Slot $w={21}>
      <Ico w={19} h={18}>
        <circle cx="8" cy="3" r="2.2" stroke="#444" strokeWidth="1.2" />
        <path d="M5.500 3.800L2 2.500C.5 2.300.3 4 1.500 4.600L5 6.200v4L3.500 15c-.2 1.800 1.500 2.300 2.200 1L7 13M10.500 3.800L14 2.500c1.500-.2 1.700 1.500.5 2.100L11 6.200v3" stroke="#444" strokeWidth="1.2" />
        <path d="M8.800 13.200l3.200 3.300 6-7" stroke="#444" strokeWidth="1.5" />
      </Ico>
    </Slot>
    <Slot $w={1228}><Dark>Accessibility: Good to go</Dark></Slot>
    <Slot $w={21}>
      <Ico w={18} h={18}>
        <path d="M.7 4V1H3.500M14.500 1h2.800v3M.7 14v3H3.500M14.500 17h2.800v-3" stroke="#555" strokeWidth="1.2" />
        <path d="M4.500 3.500h5.300l3.500 3.500v8H4.500z" stroke="#444" strokeWidth="1.4" />
        <path d="M9.500 3.800v3.500h3.500" stroke="#444" strokeWidth="1.2" />
      </Ico>
    </Slot>
    <Slot $w={63}><Dark>Focus</Dark></Slot>
    <Slot $w={35}>
      <Ico w={18} h={17}>
        <path d="M9 3C7 1.500 4 1.200 1 1.500v12.500c3-.2 6 0 8 1.500 2-1.500 5-1.700 8-1.500V1.500c-3-.3-6 0-8 1.500zM9 3v12.500" stroke="#555" strokeWidth="1.3" />
        <path d="M3 5h4M3 8h4M3 11h4M11 5h4M11 8h4M11 11h4" stroke="#555" strokeWidth="1.2" />
      </Ico>
    </Slot>
    <ViewActive>
      <Ico w={15} h={18}>
        <path d="M.7.7h13.600v16.500H.7z" stroke="#444" strokeWidth="1.4" />
        <path d="M3 4h9M3 6.500h9M3 9h9M3 11.500h9M3 14h9" stroke="#444" strokeWidth="1.2" />
      </Ico>
    </ViewActive>
    <Slot $w={41}>
      <Ico w={19} h={18}>
        <path d="M6 15.500H1V1h14.500v5M1 4.500h14.500" stroke="#555" strokeWidth="1.3" />
        <path d="M3 7.500h5M3 10h3M3 12.500h3" stroke="#555" strokeWidth="1.2" />
        <circle cx="12.5" cy="12" r="5.5" fill="#555" />
        <path d="M12.500 7v10M7.500 10.500h10M7.500 13.500h10" stroke="#d8d8d8" strokeWidth=".8" />
        <ellipse cx="12.5" cy="12" rx="2.5" ry="5" stroke="#d8d8d8" strokeWidth=".8" />
      </Ico>
    </Slot>
    <Ico w={10} h={2}><path d="M0 1h10" stroke="#444" strokeWidth="1.2" /></Ico>
    <Track><Thumb /></Track>
    <Ico w={10} h={10}><path d="M0 5h10M5 0v10" stroke="#444" strokeWidth="1.2" /></Ico>
    <Zoomed>100%</Zoomed>
  </StatusBar>
);

/* ---------- taskbar ---------- */

const Taskbar = styled.div`
  height: 60px;
  flex: none;
  display: flex;
  align-items: center;
  border-top: 1px solid rgba(90, 90, 90, 0.35);
  color: #fff;
  background: linear-gradient(
    92deg,
    #c50b6e 0,
    #cd0b6e 150px,
    #e0176c 260px,
    #e71e70 620px,
    #e5366f 720px,
    #d84a6c 795px,
    #a04a74 840px,
    #7c4275 870px,
    #643a70 920px,
    #4e3766 990px,
    #4a3866 1100px,
    #5a3667 1220px,
    #483866 1300px,
    #443664 1600px,
    #3d4a72 1660px,
    #355e7e 1700px,
    #2a7a88 1770px,
    #287484 1850px,
    #25848a 1920px
  );
`;
const Weather = styled.div`
  width: 567px;
  font-size: 14px;
  line-height: 20px;
  padding-bottom: 1px;
`;
const Faint = styled.div`
  color: #f7c3dd;
`;
const AppButton = styled.div<{ $on?: boolean }>`
  position: relative;
  width: 50px;
  height: 50px;
  margin: 0 5px 0 0;
  flex: none;
  display: flex;
  align-items: center;
  justify-content: center;
  border-radius: 5px;
  background: ${(p) => (p.$on ? "rgba(255,255,255,0.09)" : "transparent")};
  border: 1px solid ${(p) => (p.$on ? "rgba(255,255,255,0.08)" : "transparent")};
`;
const RunMark = styled.i<{ $on?: boolean }>`
  position: absolute;
  bottom: 0;
  width: ${(p) => (p.$on ? 20 : 8)}px;
  height: 4px;
  border-radius: 2px;
  background: ${(p) => (p.$on ? "#4cc2ff" : "#aea3b8")};
`;
const Tray = styled.div`
  margin-left: auto;
  display: flex;
  align-items: center;
`;
const Clock = styled.div`
  width: 86px;
  padding-bottom: 1px;
  text-align: right;
  font-size: 14.5px;
  line-height: 20px;
`;
const Badge = styled.div`
  width: 20px;
  height: 20px;
  margin: 0 24px 0 15px;
  border-radius: 50%;
  background: #4cc2ff;
  color: #10202c;
  font-size: 12px;
  display: flex;
  align-items: center;
  justify-content: center;
`;

const Svg30 = ({ children }: { children: React.ReactNode }) => (
  <svg width="30" height="30" viewBox="0 0 30 30" fill="none">
    {children}
  </svg>
);

const APPS: { run?: boolean; on?: boolean; icon: React.ReactNode }[] = [
  {
    icon: (
      <Svg30>
        <defs>
          <linearGradient id="win" x1="0" y1="0" x2="1" y2="1" gradientUnits="objectBoundingBox">
            <stop stopColor="#7fe0ff" />
            <stop offset="1" stopColor="#0a9cff" />
          </linearGradient>
        </defs>
        <path d="M.5 1.500q0-.5.500-.5H14v14H.5zM15.500 1H29q.5 0 .5.500V15h-14zM.5 16.200H14v13.300H1q-.5 0-.5-.5zM15.500 16.200h14V29q0 .5-.5.500H15.500z" fill="url(#win)" />
      </Svg30>
    ),
  },
  {
    icon: (
      <Svg30>
        <circle cx="13" cy="12.5" r="10.5" fill="#fff" fillOpacity=".22" stroke="#e9e4e8" strokeWidth="2.8" />
        <path d="M20.500 20.500l6.500 6.500" stroke="#d9d6dc" strokeWidth="3.6" strokeLinecap="round" />
      </Svg30>
    ),
  },
  {
    icon: (
      <Svg30>
        <path d="M0 0h30v30H0z" fill="#25acd8" />
        <path d="M10 4L7 24.500l14.500-.5 1.500-3z" fill="#12325f" />
        <path d="M10 4h5l-.6 14H23v4H9.500z" fill="#fff" />
      </Svg30>
    ),
  },
  {
    icon: (
      <Svg30>
        <path d="M0 10L15 .8 30 10v4H0z" fill="#0f5bb0" />
        <path d="M3 10.200h24L15 19z" fill="#f2f2f2" />
        <path d="M0 10l15 9.500L30 28.500H0z" fill="#1f9ae8" />
        <path d="M30 10v18.500L15 19z" fill="#3cc3f5" />
        <path d="M0 28.500L15 19l15 9.500z" fill="#1c8fdf" />
      </Svg30>
    ),
  },
  {
    icon: (
      <Svg30>
        <path d="M0 3.500Q0 2 1.500 2H10l3 3.500H28.500Q30 5.500 30 7v4H0z" fill="#e0a20a" />
        <path d="M0 28V8.500l10-.3L13 5.600h15.500Q30 5.600 30 7v21z" fill="#fcca3c" />
        <path d="M5.500 28.200v-5Q5.500 21 8 21h14q2.500 0 2.500 2.200v5z" fill="#1173c9" />
        <path d="M9 24.500h12" stroke="#0a4c94" strokeWidth="1.5" />
      </Svg30>
    ),
  },
  {
    icon: (
      <Svg30>
        <circle cx="15" cy="15" r="13" fill="#1f96d3" stroke="#1480bd" />
        <path d="M6.500 14.800L22 8.800l-2.500 12.500-4.500-3.300-2.300 2.200-.5-4.200 6.500-5.300-8 4.800z" fill="#fff" />
      </Svg30>
    ),
  },
  {
    run: true,
    icon: (
      <Svg30>
        <defs>
          <linearGradient id="edgeTop" x1="0" y1="0" x2="1" y2=".4">
            <stop stopColor="#1f9be6" />
            <stop offset=".5" stopColor="#33c6da" />
            <stop offset="1" stopColor="#66e254" />
          </linearGradient>
        </defs>
        <circle cx="15" cy="15" r="15" fill="#0f6cc6" />
        <path d="M.2 13C1.500 5 7.500 0 15 0c8.500 0 15 6 15 12.500 0 4.500-3.500 7.500-7.500 7.500-3 0-4.500-1-4.500-2.200 0-.8 1.300-1.300 1.300-3.800C19.300 11 16 8 11.500 8 6.500 8 2.500 10 .2 13z" fill="url(#edgeTop)" />
        <path d="M12 13.500c-4 3.500-3.500 12 3.500 16.400 5.500.2 10-2.400 12.500-7-6 3.100-16 1.100-16-9.400z" fill="#124b8d" />
        <path d="M12.500 14c-1.500 5 2.500 10.500 9 10.500 3 0 5-1 6.500-2-7 3.500-12-1.500-10.500-5.500 1-2.500-3.500-4.500-5-3z" fill="#4b3768" />
      </Svg30>
    ),
  },
  {
    icon: (
      <Svg30>
        <rect x="1" y="1" width="28" height="28" rx="8.5" fill="#4a8cff" />
        <path d="M6.500 10h9.500q2.500 0 2.500 2.500V20H9q-2.500 0-2.500-2.500zM19.500 13.200L23.500 10v10l-4-3.200z" fill="#fff" />
      </Svg30>
    ),
  },
  {
    run: true,
    icon: (
      <Svg30>
        <path d="M22 0L1 19l-.7 1.800 2.500 2.300h1.500L22.500 9z" fill="#0a7bc4" />
        <path d="M22 30L1 11 .3 9.200 2.800 7h1.500l18.200 14z" fill="#0f8ad6" />
        <path d="M22 0l7.500 3.500v23L22 30q1-.5 1-2V2q0-1.500-1-2z" fill="#25a3ef" />
      </Svg30>
    ),
  },
  {
    run: true,
    icon: (
      <Svg30>
        <rect width="30" height="30" rx="2.5" fill="#e8731f" />
        <path d="M2 2h26v5Q15 1 2 7z" fill="#f5a868" fillOpacity=".7" />
        <path d="M10 7.500c2.800 0 3.500 2 5 2s2.200-2 5-2 4.500 2 4.500 4.200-1.500 3.300-1.500 3.300 1.500 1.100 1.500 3.300-1.700 4.200-4.500 4.200-3.500-2-5-2-2.200 2-5 2-4.500-2-4.500-4.200S7 15 7 15s-1.500-1.100-1.500-3.300S7.200 7.500 10 7.500z" stroke="#fff" strokeWidth="3.4" />
        <path d="M11 15h8M15 12.500v5" stroke="#fff" strokeWidth="3" />
      </Svg30>
    ),
  },
  {
    run: true,
    icon: (
      <Svg30>
        <rect x=".7" y=".7" width="28.6" height="28.6" fill="#b90404" stroke="#8d0b14" strokeWidth="1.4" strokeDasharray="2 1.5" />
        <path d="M6.500 24.500L11 6h10.500M8.500 14.500h8.500" stroke="#fff" strokeWidth="3.3" />
        <path d="M15 15.500h8.500L14.500 24h8.500" stroke="#fff" strokeWidth="2.8" />
      </Svg30>
    ),
  },
  {
    run: true,
    on: true,
    icon: (
      <Svg30>
        <path d="M8 1.500h21v7H8z" fill="#41a5ee" />
        <path d="M8 8.500h21v7H8z" fill="#2b7cd3" />
        <path d="M8 15.500h21v6.500H8z" fill="#185abd" />
        <path d="M8 22h21v6.500H8z" fill="#103f91" />
        <rect x="1" y="7.500" width="15.5" height="15.5" rx="1.5" fill="#1750b5" />
        <text x="8.7" y="19.5" textAnchor="middle" fontSize="11.5" fontWeight="700" fill="#fff" fontFamily='"Open Sans", sans-serif'>W</text>
      </Svg30>
    ),
  },
];

const TaskbarView = () => (
  <Taskbar>
    <Slot $w={64} $pl={25}>
      <Ico w={30} h={27}>
        <path d="M11.500.5C17 4.500 17 13 11 16.500 7 18.500 2 16.500 0 11.800 5.500 14 13 9.500 11.500.5z" fill="#f3a32a" />
        <path d="M8.500 26.500c-6.500 0-7.500-9-.5-9.500C8.500 9.500 19.500 8 21 15c9.500-1 10 11.500 1.500 11.500z" fill="#a9c8f4" />
        <path d="M9 25.500c-4.500 0-5.500-5-1-7 3-1.500 6 1.500 9.500 0s8.500-1 9.500 2.500-1 4.500-4 4.500z" fill="#d5e4fa" />
      </Ico>
    </Slot>
    <Weather>
      27°C
      <Faint>Berawan</Faint>
    </Weather>
    <Slot $pl={2}>
      {APPS.map((a, i) => (
        <AppButton key={i} $on={a.on}>
          {a.icon}
          {a.run && <RunMark $on={a.on} />}
        </AppButton>
      ))}
    </Slot>
    <Tray>
      <Slot $w={33}>
        <Ico w={17} h={10}><path d="M.8 9l7.700-7.700L16.200 9" stroke="#fff" strokeWidth="1.4" /></Ico>
      </Slot>
      <Slot $w={30}>
        <Ico w={20} h={16}>
          <path d="M1 6.200C6-.3 14-.3 19 6.200M3.800 9C7.500 4.200 12.500 4.200 16.200 9M6.700 11.500c2-2.600 4.600-2.600 6.600 0" stroke="#fff" strokeWidth="1.5" />
          <circle cx="10" cy="13.5" r="1.9" fill="#fff" />
        </Ico>
      </Slot>
      <Slot $w={30}>
        <Ico w={20} h={18}>
          <path d="M.8 6.300v5.400h3.700L9 15.500v-13L4.500 6.300z" stroke="#fff" strokeWidth="1.3" strokeLinejoin="round" />
          <path d="M11.500 6.500c1.200 1.500 1.200 3.500 0 5M13.800 4c2.500 3 2.500 7 0 10M16 1.500c4 4.500 4 10.500 0 15" stroke="#fff" strokeWidth="1.3" strokeLinecap="round" />
        </Ico>
      </Slot>
      <Slot $w={20}>
        <Ico w={20} h={13}>
          <rect x=".8" y=".8" width="16" height="11.4" rx="2.5" stroke="#fff" strokeWidth="1.4" />
          <rect x="3" y="3" width="8.5" height="7" rx="1" fill="#fff" />
          <path d="M17.500 4.500q2.300 0 2.300 2t-2.300 2z" fill="#fff" />
        </Ico>
      </Slot>
      <Clock>
        6:23 PM
        <div>10/5/2022</div>
      </Clock>
      <Badge>3</Badge>
    </Tray>
  </Taskbar>
);

export default function App() {
  return (
    <Screen>
      <Global />
      <TitleBarView />
      <TabStrip />
      <RibbonView />
      <DocumentView />
      <StatusView />
      <TaskbarView />
    </Screen>
  );
}
